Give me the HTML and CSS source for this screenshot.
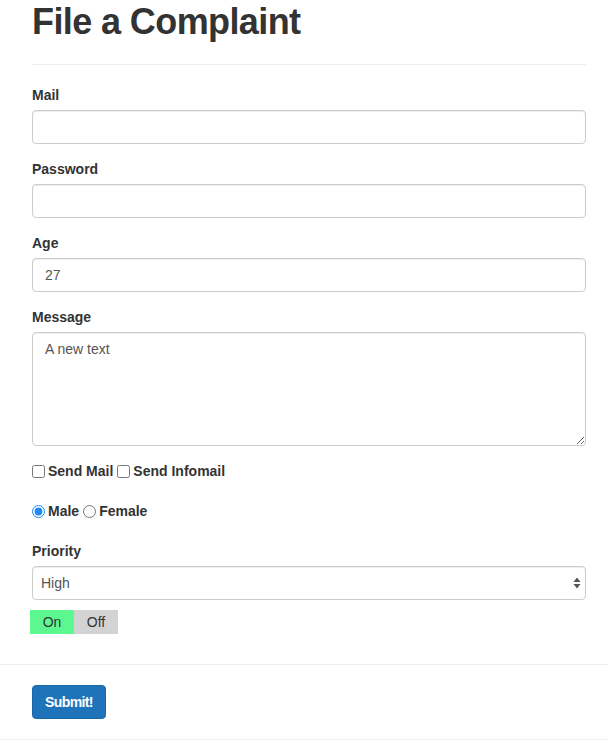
FILE: index.html
```html
<!DOCTYPE html>
<html>
<head>
<meta charset="utf-8">
<link rel="stylesheet" href="styles.css">
</head>
<body>
<div class="container">
  <div class="page-header"><h1>File a Complaint</h1></div>
  <form>
    <div class="group">
      <label class="lbl">Mail</label>
      <input class="control" type="text">
    </div>
    <div class="group">
      <label class="lbl">Password</label>
      <input class="control" type="password">
    </div>
    <div class="group">
      <label class="lbl">Age</label>
      <input class="control" type="text" value="27">
    </div>
    <div class="group">
      <label class="lbl">Message</label>
      <textarea class="control area" rows="5">A new text</textarea>
    </div>
    <div class="choice-row">
      <label class="choice"><input type="checkbox" class="box">Send Mail</label>
      <label class="choice"><input type="checkbox" class="box">Send Infomail</label>
    </div>
    <div class="choice-row radios">
      <label class="choice"><input type="radio" name="g" class="box radio" checked>Male</label>
      <label class="choice"><input type="radio" name="g" class="box radio">Female</label>
    </div>
    <div class="group priority">
      <label class="lbl">Priority</label>
      <div class="select-wrap">
        <select class="control sel"><option>High</option><option>Medium</option><option>Low</option></select>
        <svg class="arrows" width="8" height="12" viewBox="0 0 8 12"><path d="M4 0.5 L7.5 5 L0.5 5 Z M4 11.5 L7.5 7 L0.5 7 Z" fill="#555"/></svg>
      </div>
    </div>
    <div class="toggle"><span class="on">On</span><span class="off">Off</span></div>
  </form>
</div>
<div class="footer">
  <button class="btn" type="button">Submit!</button>
</div>
</body>
</html>
```
FILE: styles.css
```css
html, body {
  margin: 0;
  padding: 0;
  background: #fff;
}
body {
  font-family: "Liberation Sans", Arial, sans-serif;
  font-size: 14px;
  line-height: 20px;
  color: #333;
}
.container {
  padding: 0 22px 0 32px;
}
.page-header {
  padding-top: 2px;
  padding-bottom: 22px;
  border-bottom: 1px solid #eee;
  margin-bottom: 20px;
}
.page-header h1 {
  margin: 0;
  font-size: 36px;
  line-height: 40px;
  font-weight: bold;
  letter-spacing: -0.6px;
  color: #333;
}
form {
  display: flex;
  flex-direction: column;
}
.group {
  display: flex;
  flex-direction: column;
  margin-bottom: 15px;
}
.lbl {
  font-weight: bold;
  margin-bottom: 5px;
  line-height: 20px;
}
.control {
  box-sizing: border-box;
  width: 100%;
  height: 34px;
  padding: 6px 12px;
  font-family: "Liberation Sans", Arial, sans-serif;
  font-size: 14px;
  line-height: 20px;
  color: #555;
  background: #fff;
  border: 1px solid #ccc;
  border-radius: 4px;
  box-shadow: inset 0 1px 1px rgba(0,0,0,.075);
  margin: 0;
  outline: none;
}
.area {
  height: 114px;
  resize: vertical;
  display: block;
}
.choice-row {
  display: flex;
  align-items: center;
  height: 20px;
  gap: 4px;
}
.radios {
  margin-top: 20px;
}
.choice {
  display: flex;
  align-items: center;
  font-weight: bold;
  color: #333;
}
.box {
  width: 13px;
  height: 13px;
  margin: 0 3px 0 0;
  accent-color: #1e8bf5;
}
.priority {
  margin-top: 20px;
  margin-bottom: 10px;
}
.select-wrap {
  position: relative;
}
.sel {
  appearance: none;
  -webkit-appearance: none;
  padding-left: 8px;
  color: #555;
}
.arrows {
  position: absolute;
  right: 5px;
  top: 11px;
}
.toggle {
  display: flex;
  margin-left: -2px;
  height: 24px;
}
.toggle span {
  width: 44px;
  display: flex;
  align-items: center;
  justify-content: center;
  color: #333;
}
.toggle .on {
  background: #5cf88f;
}
.toggle .off {
  background: #d3d3d3;
}
.footer {
  margin-top: 30px;
  border-top: 1px solid #eee;
  border-bottom: 1px solid #eee;
  padding: 20px 32px;
  display: flex;
}
.btn {
  height: 34px;
  padding: 6px 12px;
  font-family: "Liberation Sans", Arial, sans-serif;
  font-size: 14px;
  font-weight: bold;
  letter-spacing: -0.6px;
  line-height: 20px;
  color: #fff;
  background: #1f74b9;
  border: 1px solid #1b68a8;
  border-radius: 4px;
  cursor: pointer;
}
```
